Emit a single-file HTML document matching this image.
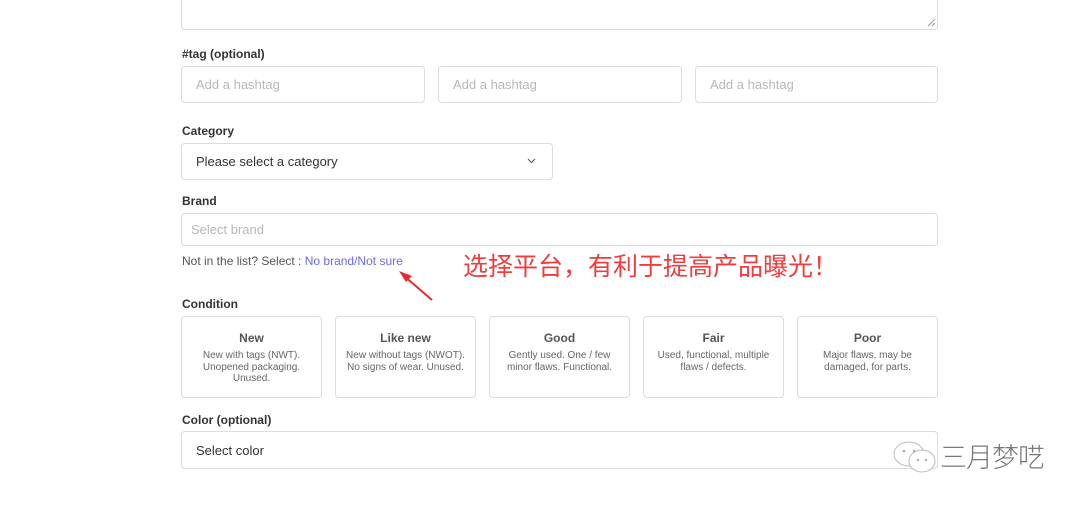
<!DOCTYPE html>
<html><head><meta charset="utf-8"><style>
body{margin:0;width:1080px;height:505px;background:#fff;position:relative;overflow:hidden;font-family:"Liberation Sans",sans-serif;color:#333}
.a{position:absolute;box-sizing:border-box}
.box{border:1px solid #dcdcdc;border-radius:4px}
.lbl{font-size:12px;font-weight:bold;color:#333}
.ph{font-size:13px;color:#b8b8b8;padding-left:14px;display:flex;align-items:center}
.card{text-align:center;color:#666}
.card b{display:block;font-size:12px;color:#555;margin-top:14px;margin-bottom:5px}
.card span{display:block;font-size:10px;line-height:11.5px;padding:0 6px}
</style></head><body>
<div class="a box" style="left:181px;top:-10px;width:757px;height:40px"></div>
<svg class="a" style="left:927px;top:18px" width="9" height="9"><path d="M1 8L8 1M5 8L8 5" stroke="#999" stroke-width="1"/></svg>
<div class="a lbl" style="left:182px;top:47px">#tag (optional)</div>
<div class="a box ph" style="left:181px;top:66px;width:244px;height:37px">Add a hashtag</div>
<div class="a box ph" style="left:438px;top:66px;width:244px;height:37px">Add a hashtag</div>
<div class="a box ph" style="left:695px;top:66px;width:243px;height:37px">Add a hashtag</div>
<div class="a lbl" style="left:182px;top:124px">Category</div>
<div class="a box ph" style="left:181px;top:143px;width:372px;height:37px;color:#333">Please select a category</div>
<svg class="a" style="left:527px;top:158px" width="9" height="6"><path d="M1 1L4.5 4.5L8 1" stroke="#555" fill="none"/></svg>
<div class="a lbl" style="left:182px;top:194px">Brand</div>
<div class="a box ph" style="left:181px;top:213px;width:757px;height:33px;padding-left:9px">Select brand</div>
<div class="a" style="left:182px;top:254px;font-size:12px;color:#555">Not in the list? Select : <span style="color:#6a6af0">No brand/Not sure</span></div>
<div class="a" style="left:463px;top:253px;font-size:25px;letter-spacing:0;color:#f23b3b;font-family:'Liberation Sans','Noto Sans CJK SC',sans-serif;line-height:28px;white-space:nowrap">选择平台，有利于提高产品曝光！</div>
<svg class="a" style="left:395px;top:266px" width="42" height="38"><path d="M37 34L8 9" stroke="#e52b2b" stroke-width="2"/><path d="M4 5L17 10L11 16Z" fill="#e52b2b"/></svg>
<div class="a lbl" style="left:182px;top:297px">Condition</div>
<div class="a box card" style="left:181px;top:316px;width:141px;height:82px"><b>New</b><span>New with tags (NWT). Unopened packaging. Unused.</span></div>
<div class="a box card" style="left:335px;top:316px;width:141px;height:82px"><b>Like new</b><span>New without tags (NWOT). No signs of wear. Unused.</span></div>
<div class="a box card" style="left:489px;top:316px;width:141px;height:82px"><b>Good</b><span>Gently used. One / few minor flaws. Functional.</span></div>
<div class="a box card" style="left:643px;top:316px;width:141px;height:82px"><b>Fair</b><span>Used, functional, multiple flaws / defects.</span></div>
<div class="a box card" style="left:797px;top:316px;width:141px;height:82px"><b>Poor</b><span>Major flaws, may be damaged, for parts.</span></div>
<div class="a lbl" style="left:182px;top:413px">Color (optional)</div>
<div class="a box ph" style="left:181px;top:431px;width:757px;height:38px;color:#333">Select color</div>
<svg class="a" style="left:892px;top:440px" width="48" height="34"><ellipse cx="17" cy="14" rx="15" ry="12" fill="#fff" stroke="#bbb"/><ellipse cx="30" cy="21" rx="13" ry="11" fill="#fff" stroke="#bbb"/><circle cx="12" cy="11" r="1.3" fill="#aaa"/><circle cx="22" cy="11" r="1.3" fill="#aaa"/><circle cx="26" cy="20" r="1.2" fill="#aaa"/><circle cx="34" cy="20" r="1.2" fill="#aaa"/></svg>
<div class="a" style="left:940px;top:442px;font-size:27px;color:#777;font-family:'Liberation Sans','Noto Sans CJK SC',sans-serif;line-height:32px;letter-spacing:-1px;font-weight:300">三月梦呓</div>
</body></html>
